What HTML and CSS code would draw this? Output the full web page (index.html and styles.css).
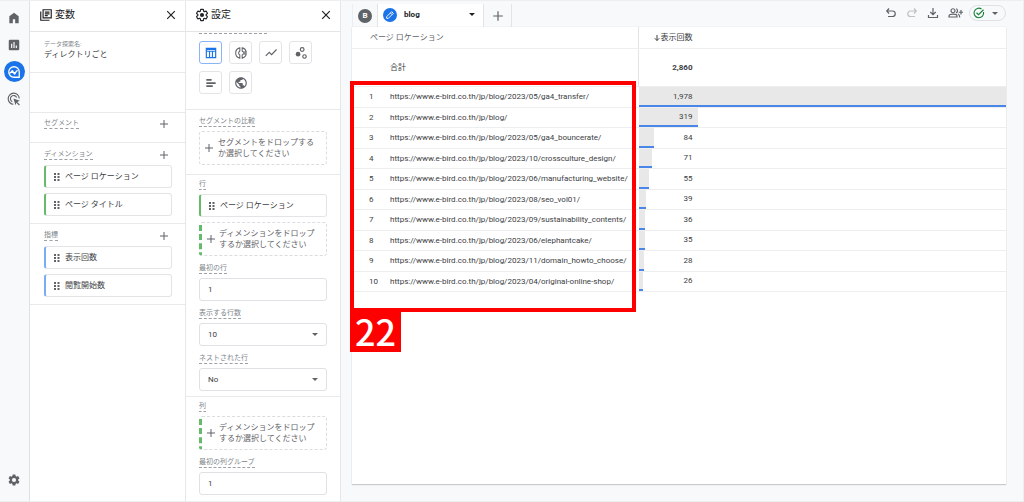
FILE: index.html
```html
<!DOCTYPE html>
<html lang="ja">
<head>
<meta charset="utf-8">
<meta name="viewport" content="width=device-width, initial-scale=1">
<title>データ探索</title>
<link rel="stylesheet" href="styles.css">
</head>
<body>
<svg class="defs" aria-hidden="true">
  <symbol id="plus" viewBox="0 0 10 10"><path d="M5 1v8M1 5h8" fill="none" stroke="currentColor" stroke-width="1"/></symbol>
  <symbol id="close" viewBox="0 0 10 10"><path d="M1.200 1.200l7.600 7.600M8.800 1.200L1.200 8.800" fill="none" stroke="currentColor" stroke-width="1.200"/></symbol>
  <symbol id="grip" viewBox="0 0 6 8"><path d="M0 0h2v2H0zM3.500 0h2v2h-2zM0 3h2v2H0zM3.500 3h2v2h-2zM0 6h2v2H0zM3.500 6h2v2h-2z" fill="#5f6368"/></symbol>
  <symbol id="gear" viewBox="0 0 24 24"><path d="M19.140 12.940c.04-.3.06-.61.06-.94 0-.32-.02-.64-.07-.94l2.030-1.580a.49.49 0 0 0 .12-.61l-1.920-3.320a.488.488 0 0 0-.59-.22l-2.390.96c-.5-.38-1.030-.7-1.620-.94l-.36-2.540a.484.484 0 0 0-.48-.41h-3.840c-.24 0-.43.17-.47.41l-.36 2.540c-.59.24-1.130.57-1.620.94l-2.390-.96c-.22-.08-.47 0-.59.22L2.740 8.870c-.12.21-.08.47.12.61l2.030 1.580c-.05.3-.09.63-.09.94s.02.64.07.94l-2.030 1.580a.49.49 0 0 0-.12.61l1.920 3.320c.12.22.37.29.59.22l2.390-.96c.5.38 1.030.7 1.620.94l.36 2.540c.05.24.24.41.48.41h3.840c.24 0 .44-.17.47-.41l.36-2.540c.59-.24 1.130-.56 1.620-.94l2.390.96c.22.08.47 0 .59-.22l1.920-3.320c.12-.22.07-.47-.12-.61z"/></symbol>
  <symbol id="down" viewBox="0 0 6 3"><path d="M0 0h6L3 3z" fill="currentColor"/></symbol>
</svg>

<nav class="rail" aria-label="メイン">
  <a href="#home" aria-label="ホーム"><svg width="14" height="14" viewBox="0 0 24 24"><path d="M4 21V9l8-6 8 6v12h-6v-7h-4v7z" fill="currentColor"/></svg></a>
  <a href="#reports" aria-label="レポート"><svg width="14" height="14" viewBox="0 0 24 24"><path fill="currentColor" fill-rule="evenodd" d="M5 3h14a2 2 0 0 1 2 2v14a2 2 0 0 1-2 2H5a2 2 0 0 1-2-2V5a2 2 0 0 1 2-2zm2 7v7h2v-7zm4-3v10h2V7zm4 6v4h2v-4z"/></svg></a>
  <a href="#explore" class="current" aria-label="探索"><svg width="14" height="14" viewBox="0 0 24 24" fill="none" stroke="currentColor" stroke-width="2.200"><path d="M12 21a9 9 0 1 1 9-9v9z"/><path d="M4 14.500l5-4 4 4 5-5.500"/><circle cx="9" cy="11" r="1"/><circle cx="13" cy="14" r="1"/></svg></a>
  <a href="#ads" aria-label="広告"><svg width="14" height="14" viewBox="0 0 24 24" fill="none" stroke="currentColor" stroke-width="2"><path d="M11 21a9.500 9.500 0 1 1 10-10"/><path d="M9 16.500a5.500 5.500 0 1 1 7.500-7"/><path d="M11 11l11 4-4.500 2 4.500 4.500-1.500 1.500-4.500-4.500-1.500 4z" fill="currentColor" stroke="none"/></svg></a>
  <a href="#admin" class="admin" aria-label="管理"><svg width="14" height="14" viewBox="0 0 24 24"><use href="#gear" fill="currentColor"/><circle cx="12" cy="12" r="3.600" fill="#f8f9fa"/></svg></a>
</nav>

<aside class="panel">
  <header class="panel-head">
    <svg width="14" height="14" viewBox="0 0 24 24" fill="none" stroke="currentColor" stroke-width="2"><path d="M7 3h14v14H7zM3 6v15h15M10 7h8M10 10h8M10 13h5"/></svg>
    <h2>変数</h2>
    <button class="icon-btn" aria-label="変数を閉じる"><svg width="10" height="10"><use href="#close"/></svg></button>
  </header>
  <section class="block name-block">
    <label for="exploration">データ探索名:</label>
    <input id="exploration" class="name-input" value="ディレクトリごと">
  </section>
  <section class="block blank"></section>
  <section class="block segment">
    <div class="row-head"><h3 class="cap">セグメント</h3><button class="icon-btn" aria-label="セグメントを追加"><svg width="10" height="10"><use href="#plus"/></svg></button></div>
  </section>
  <section class="block fields">
    <div class="row-head"><h3 class="cap">ディメンション</h3><button class="icon-btn" aria-label="ディメンションを追加"><svg width="10" height="10"><use href="#plus"/></svg></button></div>
    <button class="chip"><svg width="6" height="8"><use href="#grip"/></svg>ページ ロケーション</button>
    <button class="chip"><svg width="6" height="8"><use href="#grip"/></svg>ページ タイトル</button>
  </section>
  <section class="block fields">
    <div class="row-head"><h3 class="cap">指標</h3><button class="icon-btn" aria-label="指標を追加"><svg width="10" height="10"><use href="#plus"/></svg></button></div>
    <button class="chip metric-chip"><svg width="6" height="8"><use href="#grip"/></svg>表示回数</button>
    <button class="chip metric-chip"><svg width="6" height="8"><use href="#grip"/></svg>閲覧開始数</button>
  </section>
</aside>

<aside class="panel">
  <header class="panel-head">
    <svg width="14" height="14" viewBox="0 0 24 24"><use href="#gear" fill="none" stroke="currentColor" stroke-width="2"/><circle cx="12" cy="12" r="3.500" fill="currentColor"/></svg>
    <h2>設定</h2>
    <button class="icon-btn" aria-label="設定を閉じる"><svg width="10" height="10"><use href="#close"/></svg></button>
  </header>
  <section class="block techniques">
    <div class="cut-line"></div>
    <div class="tiles">
      <button class="tile on" aria-label="自由形式"><svg width="14" height="14" viewBox="0 0 24 24" fill="none" stroke="currentColor" stroke-width="2"><path d="M4 4h16v16H4zM4 9h16M9.500 9v11M14.500 9v11M4 6h16"/></svg></button>
      <button class="tile" aria-label="ドーナツ グラフ"><svg width="14" height="14" viewBox="0 0 24 24" fill="none" stroke="currentColor" stroke-width="1.800"><path d="M10 3.200v5.300a4 4 0 0 0 0 7v5.300a9 9 0 0 1 0-17.600zM14 3.200v5.300q1.500.8 2 2h5A9 9 0 0 0 14 3.200zM14 20.800v-5.300q1.500-.8 2-2h5a9 9 0 0 1-7 7.300z"/></svg></button>
      <button class="tile" aria-label="折れ線グラフ"><svg width="14" height="14" viewBox="0 0 24 24" fill="none" stroke="currentColor" stroke-width="2"><path d="M3 17l6-6 4 4 8.500-9"/></svg></button>
      <button class="tile" aria-label="散布図"><svg width="14" height="14" viewBox="0 0 24 24" fill="none" stroke="currentColor" stroke-width="2"><circle cx="14" cy="6" r="3.200"/><circle cx="7" cy="14" r="4" fill="currentColor" stroke="none"/><circle cx="18" cy="18" r="3"/></svg></button>
      <button class="tile" aria-label="棒グラフ"><svg width="14" height="14" viewBox="0 0 24 24"><path d="M4 5h9v3H4zM4 10.500h16v3H4zM4 16h11v3H4z" fill="currentColor"/></svg></button>
      <button class="tile" aria-label="地図"><svg width="14" height="14" viewBox="0 0 24 24"><path fill="currentColor" d="M12 2C6.480 2 2 6.480 2 12s4.480 10 10 10 10-4.480 10-10S17.520 2 12 2zm-1 17.930c-3.950-.49-7-3.850-7-7.930 0-.62.08-1.210.21-1.790L9 15v1c0 1.100.9 2 2 2v1.930zm6.900-2.540c-.26-.81-1-1.390-1.900-1.390h-1v-3c0-.55-.45-1-1-1H8v-2h2c.55 0 1-.45 1-1V7h2c1.100 0 2-.9 2-2v-.41c2.930 1.190 5 4.060 5 7.410 0 2.080-.8 3.970-2.100 5.390z"/></svg></button>
    </div>
  </section>
  <section class="block compare">
    <h3 class="cap">セグメントの比較</h3>
    <button class="drop"><svg width="10" height="10"><use href="#plus"/></svg><span>セグメントをドロップするか選択してください</span></button>
  </section>
  <section class="block setup">
    <h3 class="cap">行</h3>
    <button class="chip"><svg width="6" height="8"><use href="#grip"/></svg>ページ ロケーション</button>
    <button class="drop dim"><svg width="10" height="10"><use href="#plus"/></svg><span>ディメンションをドロップするか選択してください</span></button>
    <label class="cap" for="first-row">最初の行</label>
    <input class="field" id="first-row" value="1">
    <label class="cap" for="row-count">表示する行数</label>
    <div class="pick"><select class="field" id="row-count"><option>10</option><option>25</option></select><svg width="6" height="3"><use href="#down"/></svg></div>
    <label class="cap" for="nested">ネストされた行</label>
    <div class="pick"><select class="field" id="nested"><option>No</option><option>Yes</option></select><svg width="6" height="3"><use href="#down"/></svg></div>
  </section>
  <section class="block setup last">
    <h3 class="cap">列</h3>
    <button class="drop dim"><svg width="10" height="10"><use href="#plus"/></svg><span>ディメンションをドロップするか選択してください</span></button>
    <label class="cap" for="first-group">最初の列グループ</label>
    <input class="field" id="first-group" value="1">
  </section>
</aside>

<main class="canvas">
  <div class="topbar">
    <div class="tabs">
      <button class="tab tab-b" aria-label="B"><span class="dot">B</span></button>
      <button class="tab tab-on"><span class="dot pen"><svg width="10" height="10" viewBox="0 0 24 24" fill="none" stroke="currentColor" stroke-width="2.200"><path d="M4 20v-4L16 4l4 4L8 20zM13 7l4 4"/></svg></span><span class="tab-name">blog</span><svg width="6" height="3"><use href="#down"/></svg></button>
      <button class="tab tab-add" aria-label="タブを追加"><svg width="12" height="12"><use href="#plus"/></svg></button>
    </div>
    <div class="tools">
      <button class="icon-btn" aria-label="元に戻す"><svg width="12" height="12" viewBox="0 0 24 24" fill="none" stroke="currentColor" stroke-width="2.400"><path d="M8 3L3.500 8 8 13M4 8h11a5.500 5.500 0 0 1 0 11H6"/></svg></button>
      <button class="icon-btn faint" aria-label="やり直す"><svg width="12" height="12" viewBox="0 0 24 24" fill="none" stroke="currentColor" stroke-width="2.400"><path d="M16 3l4.500 5L16 13M20 8H9a5.500 5.500 0 0 0 0 11h9"/></svg></button>
      <button class="icon-btn" aria-label="ダウンロード"><svg width="12" height="12" viewBox="0 0 24 24" fill="none" stroke="currentColor" stroke-width="2.400"><path d="M12 2v13M6.500 10l5.500 5.500 5.500-5.500M3 16v5h18v-5"/></svg></button>
      <button class="icon-btn" aria-label="共有"><svg width="15" height="12" viewBox="0 0 30 24" fill="none" stroke="currentColor" stroke-width="2.400"><circle cx="10" cy="7.500" r="4"/><path d="M2 20v-2c0-5 16-5 16 0v2zM16 3.500c4 0 4 8 0 8M20 14c3 1 3.500 2.500 3.500 7M26 6v9M21.500 10.500h9"/></svg></button>
      <button class="status" aria-label="ステータス"><svg width="12" height="12" viewBox="0 0 24 24" fill="none" stroke="#188038" stroke-width="2.200"><path d="M21 10a9.500 9.500 0 1 1-4-6M7 11.500l4 4L21 5.500"/></svg><svg width="6" height="3"><use href="#down"/></svg></button>
    </div>
  </div>

  <div class="sheet">
    <table class="report">
      <colgroup><col class="col-num"><col class="col-url"><col></colgroup>
      <thead>
        <tr><th class="dim-head" colspan="2">ページ ロケーション</th><th class="metric-head"><span class="value"><svg width="6" height="6" viewBox="0 0 12 12" fill="none" stroke="currentColor" stroke-width="2"><path d="M6 0v11M1.500 6.500L6 11l4.500-4.500"/></svg>表示回数</span></th></tr>
        <tr class="total"><th></th><th>合計</th><td class="metric"><span class="value">2,860</span></td></tr>
      </thead>
      <tbody>
        <tr><td class="num">1</td><td>https://www.e-bird.co.th/jp/blog/2023/05/ga4_transfer/</td><td class="metric"><div class="cell"><span class="bar" style="width:100%"></span><span class="value">1,978</span></div></td></tr>
        <tr><td class="num">2</td><td>https://www.e-bird.co.th/jp/blog/</td><td class="metric"><div class="cell"><span class="bar" style="width:16.1%"></span><span class="value">319</span></div></td></tr>
        <tr><td class="num">3</td><td>https://www.e-bird.co.th/jp/blog/2023/05/ga4_bouncerate/</td><td class="metric"><div class="cell"><span class="bar" style="width:4.2%"></span><span class="value">84</span></div></td></tr>
        <tr><td class="num">4</td><td>https://www.e-bird.co.th/jp/blog/2023/10/crossculture_design/</td><td class="metric"><div class="cell"><span class="bar" style="width:3.6%"></span><span class="value">71</span></div></td></tr>
        <tr><td class="num">5</td><td>https://www.e-bird.co.th/jp/blog/2023/06/manufacturing_website/</td><td class="metric"><div class="cell"><span class="bar" style="width:2.8%"></span><span class="value">55</span></div></td></tr>
        <tr><td class="num">6</td><td>https://www.e-bird.co.th/jp/blog/2023/08/seo_vol01/</td><td class="metric"><div class="cell"><span class="bar" style="width:2%"></span><span class="value">39</span></div></td></tr>
        <tr><td class="num">7</td><td>https://www.e-bird.co.th/jp/blog/2023/09/sustainability_contents/</td><td class="metric"><div class="cell"><span class="bar" style="width:1.8%"></span><span class="value">36</span></div></td></tr>
        <tr><td class="num">8</td><td>https://www.e-bird.co.th/jp/blog/2023/06/elephantcake/</td><td class="metric"><div class="cell"><span class="bar" style="width:1.8%"></span><span class="value">35</span></div></td></tr>
        <tr><td class="num">9</td><td>https://www.e-bird.co.th/jp/blog/2023/11/domain_howto_choose/</td><td class="metric"><div class="cell"><span class="bar" style="width:1.4%"></span><span class="value">28</span></div></td></tr>
        <tr><td class="num">10</td><td>https://www.e-bird.co.th/jp/blog/2023/04/original-online-shop/</td><td class="metric"><div class="cell"><span class="bar" style="width:1.3%"></span><span class="value">26</span></div></td></tr>
      </tbody>
    </table>
    <div class="callout"><span class="callout-tag">22</span></div>
  </div>
</main>
</body>
</html>
```
FILE: styles.css
```css
* { box-sizing: border-box; }

body {
  margin: 0;
  min-height: 100vh;
  display: grid;
  grid-template-columns: 30px 156px 155px minmax(0, 1fr);
  border: solid #eceef0;
  border-width: 1px 1px 1px 0;
  background: #f8f9fa;
  color: #3c4043;
  font-family: Roboto, "Noto Sans CJK JP", sans-serif;
  font-size: 8px;
  line-height: 11px;
}

h2, h3 { margin: 0; font-weight: 400; }
button, input, select { font: inherit; color: inherit; margin: 0; }
button { border: 0; padding: 0; background: none; cursor: pointer; }
svg { display: block; flex: none; }
.defs { position: absolute; width: 0; height: 0; }

/* Navigation rail */
.rail {
  display: flex;
  flex-direction: column;
  align-items: center;
  gap: 6px;
  padding: 6px 1px 11px 0;
  border-right: 1px solid #dfe1e4;
}
.rail a {
  display: grid;
  place-items: center;
  width: 21px;
  height: 21px;
  border-radius: 50%;
  color: #5f6368;
}
.rail .current { background: #1a73e8; color: #fff; }
.rail .admin { margin-top: auto; }

/* Side panels */
.panel { background: #fff; border-right: 1px solid #e6e7e9; }
.panel-head {
  display: flex;
  align-items: center;
  gap: 2px;
  height: 31px;
  padding: 0 9px 2px;
  border-bottom: 1px solid #e4e5e7;
  color: #202124;
}
.panel-head h2 { flex: 1; font-size: 10px; line-height: 14px; }
.icon-btn { display: grid; place-items: center; color: #5f6368; }
.panel-head .icon-btn { color: #202124; }

.block { padding: 6px 13px 8px 14px; border-bottom: 1px solid #e8e9eb; }
.block.last { border-bottom: 0; }
.name-block { height: 41px; padding-top: 7px; }
.name-block label { display: block; font-size: 6px; line-height: 10px; color: #80868b; }
.name-input { display: block; width: 100%; height: 11px; border: 0; padding: 0; background: none; }
.blank { height: 40px; }
.segment { height: 30px; }
.row-head { display: flex; justify-content: space-between; align-items: center; padding-right: 3px; }
.cap {
  display: block;
  width: max-content;
  height: 10px;
  border-bottom: 1px dashed #9aa0a6;
  font-size: 7px;
  line-height: 9px;
  color: #80868b;
}

.chip {
  display: flex;
  align-items: center;
  gap: 5px;
  width: 100%;
  height: 23px;
  padding: 0 8px;
  border: 1px solid #e3e4e6;
  border-left: 2px solid #66bb6a;
  border-radius: 3px;
  background: #fff;
}
.metric-chip { border-left-color: #7baaf7; }
.fields { display: flex; flex-direction: column; gap: 5px; padding-top: 7px; padding-bottom: 7px; }

/* Settings */
.techniques { padding: 0 13px 15px; }
.cut-line { width: 68px; height: 2px; border-bottom: 1px dashed #9aa0a6; }
.tiles { display: flex; flex-wrap: wrap; gap: 7px; padding-top: 7px; }
.tile {
  display: grid;
  place-items: center;
  width: 23px;
  height: 23px;
  border: 1px solid #e3e4e6;
  border-radius: 3px;
  color: #5f6368;
}
.tile.on { border-color: #8ab4f8; color: #1a73e8; }
.compare { padding: 7px 13px 9px; }
.compare .cap { margin-bottom: 4px; }
.drop {
  display: flex;
  align-items: center;
  gap: 4px;
  width: 100%;
  height: 34px;
  padding: 0 4px;
  border: 1px dashed #dadce0;
  border-radius: 3px;
  color: #5f6368;
  text-align: left;
}
.drop span { width: 98px; flex: none; }
.drop.dim { gap: 3px; border-left: 3px dashed #66bb6a; }
.setup { padding: 5px 13px; }
.setup .cap { margin-bottom: 4px; }
.setup .drop { margin-bottom: 8px; }
.setup .chip { margin-bottom: 5px; }
.field {
  display: block;
  width: 100%;
  height: 23px;
  padding: 0 8px;
  border: 1px solid #dfe1e4;
  border-radius: 3px;
  background: #fff;
  appearance: none;
}
.field + .cap, .pick + .cap { margin-top: 8px; }
.pick { display: grid; align-items: center; }
.pick > * { grid-area: 1 / 1; }
.pick svg { justify-self: end; margin-right: 9px; color: #5f6368; pointer-events: none; }

/* Canvas */
.canvas { display: flex; flex-direction: column; padding: 3px 17px 17px 11px; }
.topbar { display: flex; justify-content: space-between; align-items: flex-start; }
.tabs { display: flex; }
.tab { display: flex; align-items: center; height: 23px; border-right: 1px solid #e3e4e6; }
.tab-b { width: 26px; justify-content: center; border-left: 1px solid #eceef0; }
.dot {
  display: grid;
  place-items: center;
  width: 14px;
  height: 14px;
  border-radius: 50%;
  background: #5f6368;
  color: #fff;
  font-weight: 700;
}
.pen { background: #1a73e8; }
.tab-on { width: 106px; padding: 0 8px 2px 5px; background: #fff; color: #202124; }
.tab-name { flex: 1; margin-left: 7px; text-align: left; font-weight: 700; }
.tab-add { width: 28px; justify-content: center; color: #5f6368; }
.tools { display: flex; align-items: center; gap: 9px; padding-top: 1px; color: #5f6368; }
.icon-btn.faint { color: #bdc1c6; }
.status {
  display: flex;
  align-items: center;
  gap: 7px;
  height: 16px;
  padding: 0 7px 0 3px;
  margin-left: -3px;
  border: 1px solid #dfe1e4;
  border-radius: 8px;
  color: #5f6368;
}

.sheet {
  position: relative;
  flex: 1;
  background: #fff;
  box-shadow: 0 1px 1px #c8cacd, 0 0 1px #d0d2d5;
}
.report { width: 100%; table-layout: fixed; border-collapse: collapse; }
.col-num { width: 38px; }
.col-url { width: 248px; }
.report th, .report td {
  height: 20px;
  padding: 0;
  border-bottom: 1px solid #eceef0;
  font-weight: 400;
  line-height: 10px;
  text-align: left;
  white-space: nowrap;
}
.report tbody tr:nth-child(odd) td { height: 21px; }
.report thead th { height: 21px; padding-top: 2px; }
.report .dim-head { padding-left: 18px; color: #5f6368; }
.report tbody td { padding-top: 1px; }
.report .num { padding-left: 17px; }
.report tr > :last-child { border-left: 1px solid #e3e4e6; }
.report .total > * { height: 38px; padding-top: 1px; }
.total .value { font-weight: 700; }
.value { display: flex; justify-content: flex-end; align-items: center; gap: 1px; width: 54px; }
.report tbody td.metric { padding: 0; border-left-color: #fff; }
.cell { display: grid; align-items: center; height: 20px; }
.cell > * { grid-area: 1 / 1; }
.bar { height: 100%; background: #e8e8e8; border-bottom: 2px solid #4a86e8; }
.report tbody tr:nth-child(even) .cell { height: 19px; }

/* Numbered highlight over the page rows */
.callout {
  position: absolute;
  left: -2px;
  top: 54px;
  width: 286px;
  height: 231px;
  border: 4px solid #f00;
}
.callout-tag {
  position: absolute;
  left: -4px;
  top: 100%;
  padding: 0 5px;
  background: #f00;
  color: #fff;
  font: 500 36px/44px "Noto Sans CJK JP", sans-serif;
}
```
